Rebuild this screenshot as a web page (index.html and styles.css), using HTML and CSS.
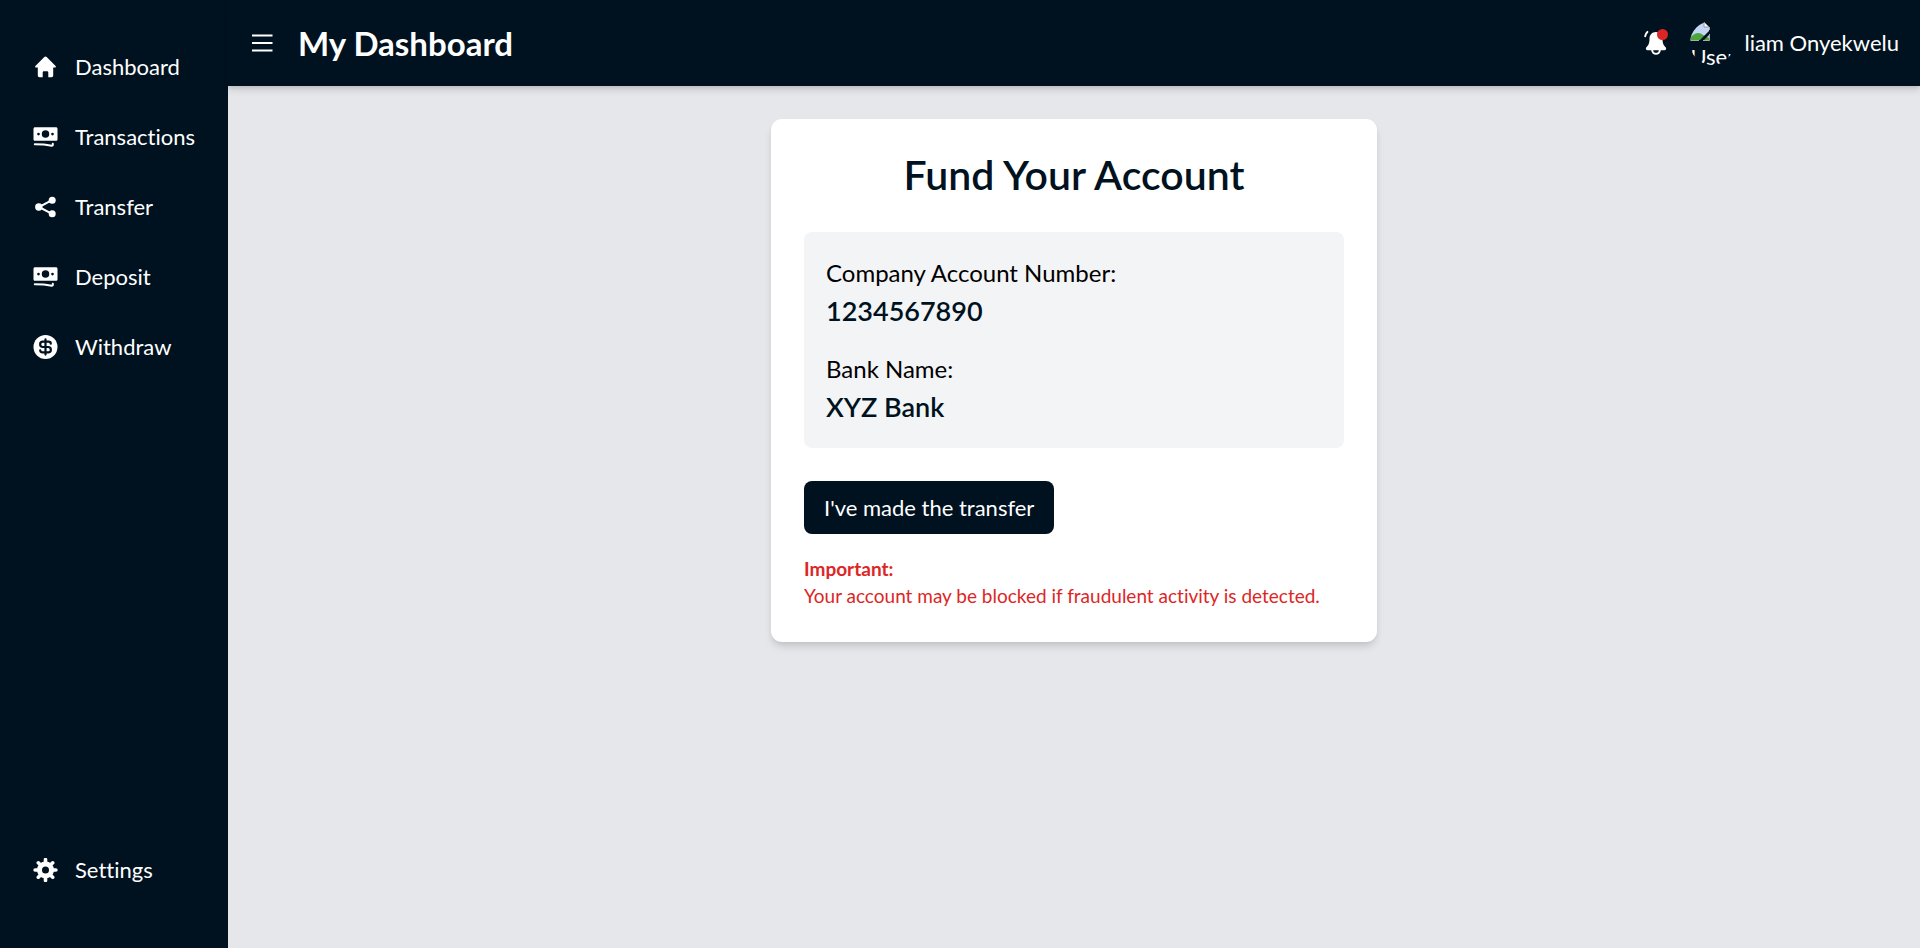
FILE: index.html
```html
<!DOCTYPE html>
<html lang="en">
<head>
<meta charset="utf-8">
<title>My Dashboard</title>
<link rel="stylesheet" href="styles.css">
</head>
<body>
<svg class="sprite" aria-hidden="true">
  <symbol id="cash" viewBox="0 0 24 24">
    <path fill-rule="evenodd" d="M1.600 2.250h20.800c.9 0 1.600.7 1.600 1.600v10.400c0 .9-.7 1.600-1.600 1.600H1.600c-.9 0-1.600-.7-1.600-1.600V3.850c0-.9.7-1.600 1.600-1.600zM12 5.300a3.750 3.750 0 1 0 0 7.500 3.750 3.750 0 0 0 0-7.500zM5 7.700a1.350 1.350 0 1 0 0 2.700 1.350 1.350 0 0 0 0-2.700zM19 7.700a1.350 1.350 0 1 0 0 2.700 1.350 1.350 0 0 0 0-2.700z"/>
    <path d="M1.300 19.300c6.200 0 11.200.3 17 1.400.6.100 1-.2 1-.8v-1.200" fill="none" stroke="currentColor" stroke-width="2" stroke-linecap="round"/>
  </symbol>
</svg>
<div class="app">
  <nav class="sidebar" aria-label="Main">
    <a class="item" href="#"><svg class="icon" viewBox="0 0 24 24"><path d="M10.800 2.100a1.700 1.700 0 0 1 2.400 0l8.900 8.900c.6.600.2 1.600-.7 1.600H19.700v7.900c0 1-.7 1.700-1.700 1.700h-3.200v-4.600c0-.8-.6-1.300-1.300-1.300h-3c-.8 0-1.300.5-1.300 1.300v4.600H6c-1 0-1.700-.7-1.700-1.700v-7.900H2.600c-.9 0-1.300-1-.7-1.600z"/></svg>Dashboard</a>
    <a class="item" href="#"><svg class="icon"><use href="#cash"/></svg>Transactions</a>
    <a class="item" href="#"><svg class="icon" viewBox="0 0 24 24"><path d="M18.500 5.200 5.500 12l13 6.800" fill="none" stroke="currentColor" stroke-width="2"/><circle cx="18.700" cy="5.200" r="3.500"/><circle cx="5.300" cy="12" r="3.700"/><circle cx="18.700" cy="18.800" r="3.500"/></svg>Transfer</a>
    <a class="item" href="#"><svg class="icon"><use href="#cash"/></svg>Deposit</a>
    <a class="item" href="#"><svg class="icon" viewBox="0 0 24 24"><circle cx="12" cy="12" r="12"/><path class="cut" d="M12 4.400v15.200M17.300 8.700c0-1.300-1-2-2.300-2H9.300a2.650 2.650 0 0 0 0 5.300h5.400a2.650 2.650 0 0 1 0 5.300H9c-1.400 0-2.300-.7-2.300-2"/></svg>Withdraw</a>
    <a class="item settings" href="#"><svg class="icon" viewBox="0 0 24 24"><circle cx="12" cy="12" r="6" fill="none" stroke="currentColor" stroke-width="5"/><path d="M12 4V1.600M12 20v2.400M4 12H1.600M20 12h2.400M6.300 6.300 4.800 4.800M17.700 17.700l1.500 1.500M17.700 6.300l1.500-1.500M6.300 17.700l-1.500 1.500" stroke="currentColor" stroke-width="3.600" stroke-linecap="round"/></svg>Settings</a>
  </nav>
  <div class="content">
    <header class="topbar">
      <button class="menu" type="button" aria-label="Toggle menu"><svg class="bars" viewBox="0 0 24 24"><path d="M2 4.500h20.500M2 12h20.500M2 19.500h20.500" fill="none" stroke="currentColor" stroke-width="2.200"/></svg></button>
      <h1 class="title">My Dashboard</h1>
      <div class="user">
        <button class="bell" type="button" aria-label="Notifications"><svg class="bell-icon" viewBox="0 0 24 24"><path d="M12 1c4 0 6.500 2.900 6.500 6.600 0 4.900 1 6.500 2.900 8.400 1.400 1.400.8 3.200-1 3.200H3.600c-1.800 0-2.400-1.800-1-3.200 1.900-1.900 2.900-3.500 2.900-8.400C5.500 3.900 8 1 12 1z"/><path d="M8.200 19a3.800 3.800 0 0 0 7.600 0M1.200 5.200C1.500 3.400 2.200 1.900 3.400.9" fill="none" stroke="currentColor" stroke-width="2" stroke-linecap="round"/></svg><span class="dot"></span></button>
        <div class="avatar"><svg class="broken" viewBox="0 0 20 20"><path d="M1 1h13l5 5v13H1z" fill="#c4d5f5"/><path d="M1 19v-3c4-5 9-5 12-2 3 1 4 2 6 3v2z" fill="#4ba63c"/><path d="M9 20 20 9v4l-7 7z" fill="#001220"/><path d="M14 1v5h5z" fill="#fff" stroke="#999"/><path d="M14 .5H.5v19H9M19.500 6v3M13 19.500h6.500V13" fill="none" stroke="#aaa"/></svg><span class="alt">User</span></div>
        <span>liam Onyekwelu</span>
      </div>
    </header>
    <main class="main">
      <section class="card">
        <h2 class="heading">Fund Your Account</h2>
        <dl class="details">
          <dt>Company Account Number:</dt><dd>1234567890</dd>
          <dt>Bank Name:</dt><dd>XYZ Bank</dd>
        </dl>
        <button class="confirm" type="button">I've made the transfer</button>
        <p class="notice"><strong>Important:</strong><br>Your account may be blocked if fraudulent activity is detected.</p>
      </section>
    </main>
  </div>
</div>
</body>
</html>
```
FILE: styles.css
```css
* { box-sizing: border-box; }
body { margin: 0; background: #e5e7eb; font: 400 22px/32px Lato, sans-serif; font-variant-ligatures: none; color: #000; }
button { font: inherit; color: inherit; border: 0; padding: 0; background: none; }
h1, h2, p, dl, dd { margin: 0; }
svg { display: block; fill: currentColor; }
.sprite { position: absolute; width: 0; height: 0; }
.app { display: flex; min-height: 100vh; }
.sidebar { display: flex; flex-direction: column; width: 228px; padding: 51px 32px 62px 33px; gap: 38px; background: #001220; color: #fff; }
.item { display: flex; align-items: center; gap: 17px; color: inherit; text-decoration: none; }
.icon { width: 25px; height: 24px; }
.settings { margin-top: auto; }
.content { display: flex; flex: 1; flex-direction: column; }
.topbar { display: flex; align-items: center; height: 86px; padding: 0 21px 0 22px; background: #001220; color: #fff; box-shadow: 0 4px 8px #0000001a, 0 2px 4px #0000001a; }
.bars { width: 24px; height: 24px; }
.title { margin-left: 24px; font-size: 33px; line-height: 44px; font-weight: 700; }
.user { display: flex; align-items: center; margin-left: auto; }
.bell { position: relative; margin-right: 22px; }
.bell-icon { width: 24px; height: 26px; }
.dot { position: absolute; top: -1px; right: 0; width: 11px; height: 11px; border-radius: 50%; background: #dc2626; }
.avatar { width: 44px; height: 44px; margin-right: 10px; border-radius: 50%; overflow: hidden; }
.broken { width: 20px; height: 20px; }
.alt { display: block; }
.main { display: flex; justify-content: center; padding: 33px; }
.card { width: 100%; max-width: 606px; padding: 33px; border-radius: 11px; background: #fff; box-shadow: 0 6px 8px -1px #0000001a, 0 3px 6px -2px #0000001a; }
.heading { margin-bottom: 34px; text-align: center; color: #001220; font-size: 41px; line-height: 46px; font-weight: 600; }
.details { padding: 22px; border-radius: 8px; background: #f3f4f6; }
.details dt { font-size: 24px; line-height: 38px; }
.details dd { font-size: 27px; line-height: 38px; font-weight: 600; color: #001220; }
.details dd + dt { margin-top: 20px; }
.confirm { margin-top: 33px; padding: 10px 20px; border-radius: 8px; background: #001220; color: #fff; line-height: 33px; }
.notice { margin-top: 21px; color: #dc2626; font-size: 19px; line-height: 27px; }
.notice strong { font-weight: 700; }
.cut { fill: none; stroke: #001220; stroke-width: 2.200; stroke-linecap: round; }
```
